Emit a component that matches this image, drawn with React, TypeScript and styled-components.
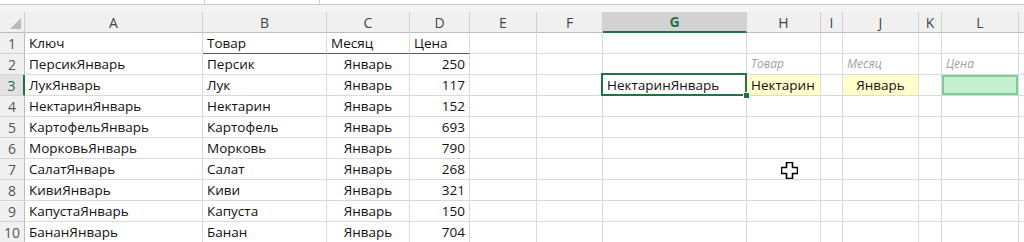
import styled, { createGlobalStyle, css } from "styled-components";

const GlobalStyle = createGlobalStyle`
  html, body {
    margin: 0;
    padding: 0;
    background: #ffffff;
    overflow: hidden;
  }
  body {
    font-family: "Open Sans", "Liberation Sans", sans-serif;
  }
`;

const COLS = [25, 178, 124, 83, 60, 67, 66, 144, 74, 22, 76, 23, 77];
const LETTERS = ["A", "B", "C", "D", "E", "F", "G", "H", "I", "J", "K", "L", ""];
const GREEN = "#217346";

const Page = styled.div`
  position: relative;
  width: 1024px;
  height: 242px;
  overflow: hidden;
  background: #ffffff;
`;

const TopStrip = styled.div`
  height: 4px;
  background: #ffffff;
  border-bottom: 1px solid #c9c9c9;
  display: grid;
  grid-template-columns: 205px 115px 1fr;
`;

const BarPiece = styled.div`
  border-right: 1px solid #d0d0d0;
`;

const Gap = styled.div`
  height: 7px;
  background: #f3f3f3;
`;

const Sheet = styled.div`
  display: grid;
  grid-template-columns: ${COLS.map((w) => `${w}px`).join(" ")} 1fr;
  grid-auto-rows: 21px;
`;

const HeadCell = styled.div<{ $active?: boolean }>`
  box-sizing: border-box;
  display: flex;
  align-items: center;
  justify-content: center;
  background: ${(p) => (p.$active ? "#d2d2d2" : "#f0f0f0")};
  border-right: 1px solid #cfcfcf;
  border-bottom: ${(p) => (p.$active ? `2px solid ${GREEN}` : "1px solid #bdbdbd")};
  color: ${(p) => (p.$active ? GREEN : "#444444")};
  font-weight: ${(p) => (p.$active ? 700 : 400)};
  font-size: 14px;
`;

const Corner = styled(HeadCell)`
  position: relative;
  svg {
    position: absolute;
    right: 3px;
    bottom: 3px;
  }
`;

const RowNum = styled.div<{ $active?: boolean }>`
  box-sizing: border-box;
  display: flex;
  align-items: center;
  justify-content: center;
  background: ${(p) => (p.$active ? "#e1e1e1" : "#f0f0f0")};
  border-bottom: 1px solid #d4d4d4;
  border-right: ${(p) => (p.$active ? `2px solid ${GREEN}` : "1px solid #bdbdbd")};
  color: ${(p) => (p.$active ? GREEN : "#555555")};
  font-size: 14px;
`;

type Fill = "none" | "yellow" | "green";

const Cell = styled.div<{
  $align?: "left" | "center" | "right";
  $fill?: Fill;
  $hint?: boolean;
  $underline?: boolean;
  $selected?: boolean;
}>`
  position: relative;
  box-sizing: border-box;
  display: flex;
  align-items: flex-end;
  justify-content: ${(p) =>
    p.$align === "right" ? "flex-end" : p.$align === "center" ? "center" : "flex-start"};
  padding: 0 4px 1px 4px;
  border-right: 1px solid #dadada;
  border-bottom: ${(p) => (p.$underline ? "1px solid #5a5a5a" : "1px solid #dadada")};
  white-space: nowrap;
  color: #111111;
  font-size: 13.5px;
  line-height: 18px;
  background: ${(p) =>
    p.$fill === "yellow" ? "#ffffcc" : p.$fill === "green" ? "#c6efce" : "#ffffff"};
  ${(p) =>
    p.$fill === "green" &&
    css`
      box-shadow: inset 0 0 0 2px #7fcb99;
    `}
  ${(p) =>
    p.$hint &&
    css`
      color: #a0a0a0;
      font-style: italic;
      font-size: 12px;
    `}
  ${(p) =>
    p.$selected &&
    css`
      &::after {
        content: "";
        position: absolute;
        inset: -2px -1px -1px -2px;
        border: 2px solid ${GREEN};
        pointer-events: none;
      }
      &::before {
        content: "";
        position: absolute;
        right: -4px;
        bottom: -4px;
        width: 5px;
        height: 5px;
        background: ${GREEN};
        border: 1px solid #ffffff;
        z-index: 2;
      }
    `}
`;

const Cursor = styled.svg`
  position: absolute;
  left: 781px;
  top: 162px;
`;

type CellData = {
  text?: string;
  align?: "left" | "center" | "right";
  fill?: Fill;
  hint?: boolean;
  underline?: boolean;
  selected?: boolean;
};

const fruits = [
  "Персик",
  "Лук",
  "Нектарин",
  "Картофель",
  "Морковь",
  "Салат",
  "Киви",
  "Капуста",
  "Банан",
];
const prices = ["250", "117", "152", "693", "790", "268", "321", "150", "704"];

function buildRows(): CellData[][] {
  const rows: CellData[][] = [];
  const blank = () => Array.from({ length: 13 }, () => ({}) as CellData);
  const first = blank();
  first[0] = { text: "Ключ" };
  first[1] = { text: "Товар", underline: true };
  first[2] = { text: "Месяц", underline: true };
  first[3] = { text: "Цена", underline: true };
  rows.push(first);
  fruits.forEach((f, i) => {
    const r = blank();
    r[0] = { text: `${f}Январь` };
    r[1] = { text: f };
    r[2] = { text: "Январь", align: "center" };
    r[3] = { text: prices[i], align: "right" };
    if (i === 0) {
      r[7] = { text: "Товар", hint: true };
      r[9] = { text: "Месяц", hint: true };
      r[11] = { text: "Цена", hint: true };
    }
    if (i === 1) {
      r[6] = { text: "НектаринЯнварь", selected: true };
      r[7] = { text: "Нектарин", fill: "yellow" };
      r[9] = { text: "Январь", fill: "yellow", align: "center" };
      r[11] = { fill: "green" };
    }
    rows.push(r);
  });
  return rows;
}

function App() {
  const rows = buildRows();
  return (
    <Page>
      <GlobalStyle />
      <TopStrip>
        <BarPiece />
        <BarPiece />
        <div />
      </TopStrip>
      <Gap />
      <Sheet>
        <Corner>
          <svg width="11" height="11" viewBox="0 0 11 11">
            <polygon points="11,0 11,11 0,11" fill="#b9b9b9" />
          </svg>
        </Corner>
        {LETTERS.map((l, i) => (
          <HeadCell key={`h${i}`} $active={l === "G"}>
            {l}
          </HeadCell>
        ))}
        {rows.map((row, ri) => [
          <RowNum key={`n${ri}`} $active={ri === 2}>
            {ri + 1}
          </RowNum>,
          ...row.map((c, ci) => (
            <Cell
              key={`${ri}-${ci}`}
              $align={c.align}
              $fill={c.fill}
              $hint={c.hint}
              $underline={c.underline}
              $selected={c.selected}
            >
              {c.text}
            </Cell>
          )),
        ])}
      </Sheet>
      <Cursor width="17" height="17" viewBox="0 0 17 17">
        <polygon
          points="5.5,0.5 11.5,0.5 11.5,5.5 16.5,5.5 16.5,11.5 11.5,11.5 11.5,16.5 5.5,16.5 5.5,11.5 0.5,11.5 0.5,5.5 5.5,5.5"
          fill="#ffffff"
          stroke="#000000"
          strokeWidth="1.6"
          strokeLinejoin="round"
        />
      </Cursor>
    </Page>
  );
}

export default App;
